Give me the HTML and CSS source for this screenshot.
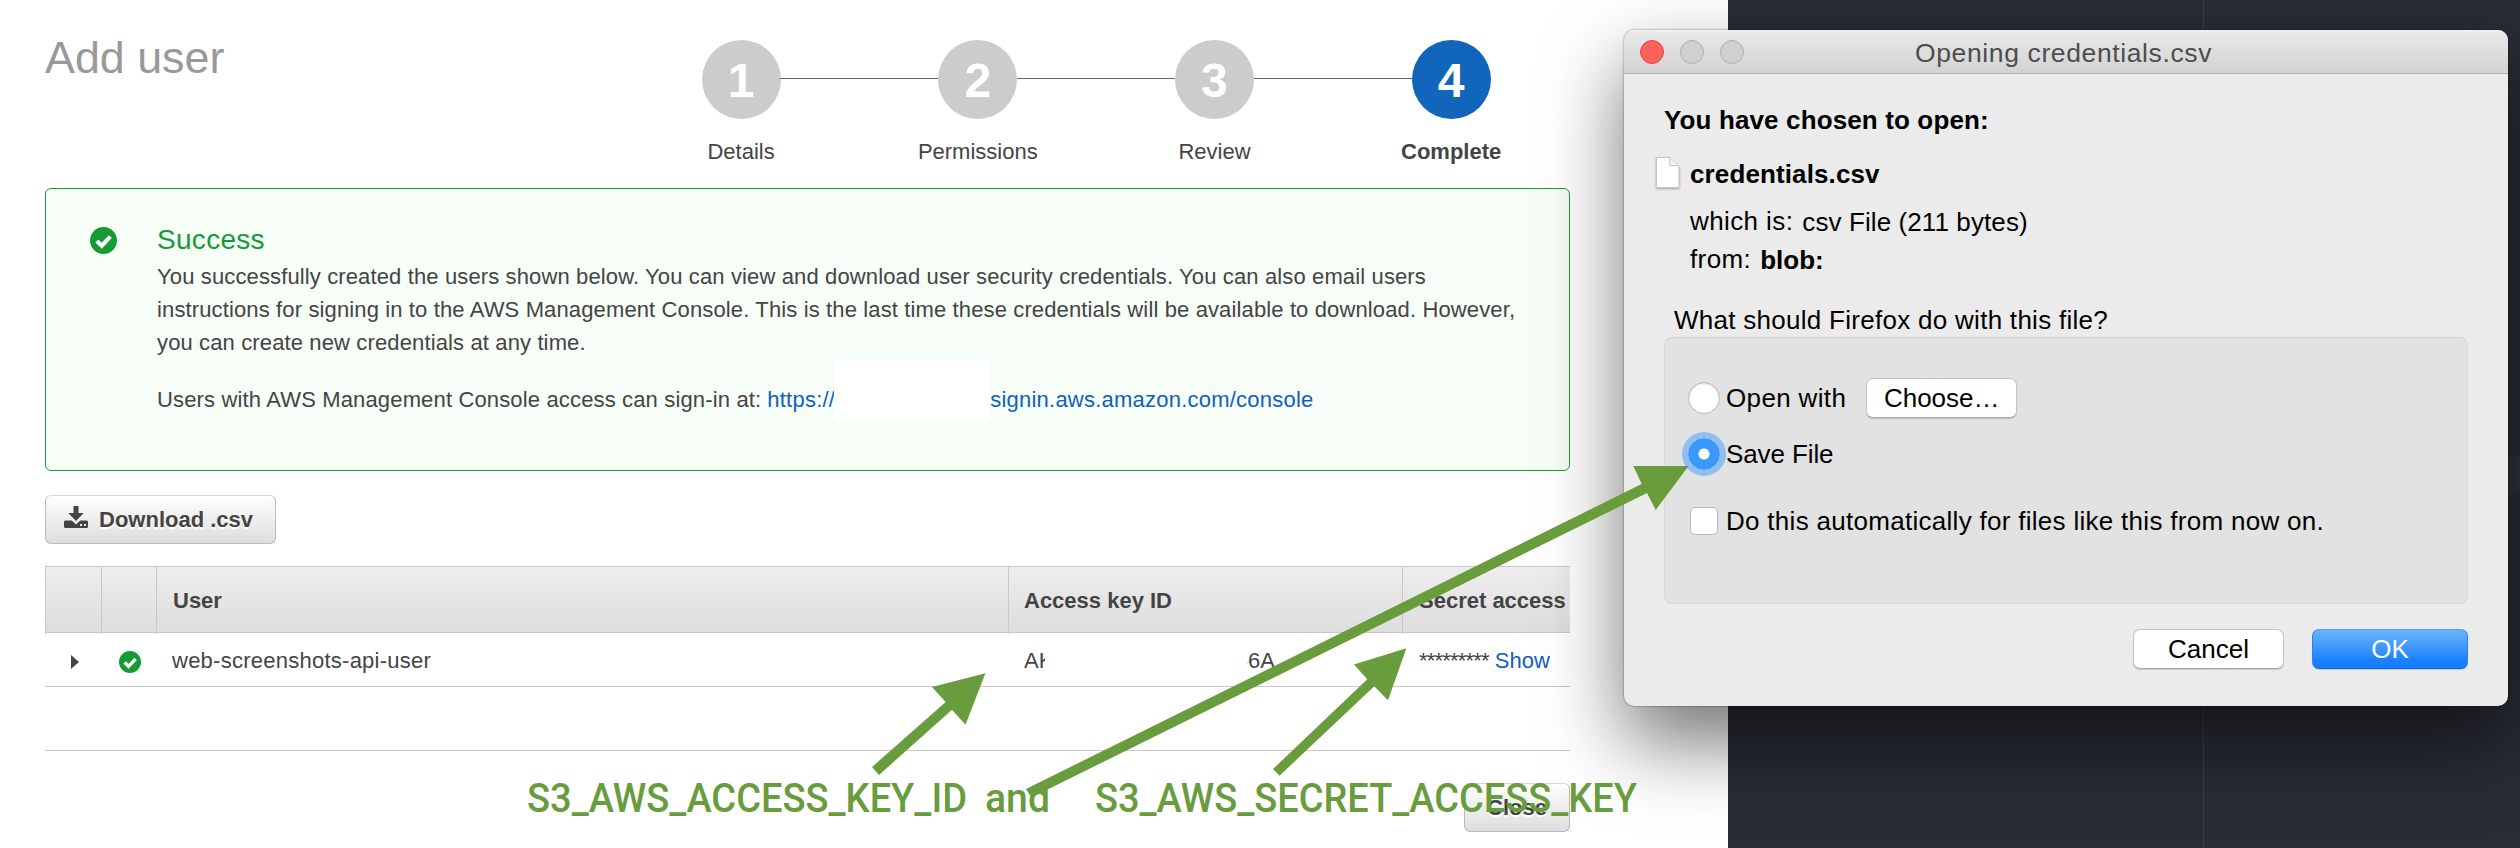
FILE: index.html
```html
<!DOCTYPE html>
<html lang="en">
<head>
<meta charset="utf-8">
<title>Add user</title>
<link rel="stylesheet" href="styles.css">
</head>
<body>
<div class="desktop">
  <main class="console">
    <header class="head">
      <h1 class="title">Add user</h1>
      <ol class="wizard">
        <li class="step"><span class="num">1</span><span class="label">Details</span></li>
        <li class="step"><span class="num">2</span><span class="label">Permissions</span></li>
        <li class="step"><span class="num">3</span><span class="label">Review</span></li>
        <li class="step current"><span class="num">4</span><span class="label">Complete</span></li>
      </ol>
    </header>

    <section class="alert">
      <svg class="alert-icon" viewBox="0 0 26 26"><circle cx="13" cy="13" r="13"/><path d="M6.6 13.4l4.7 4.7 8.3-8.8"/></svg>
      <div class="alert-body">
        <h2 class="alert-title">Success</h2>
        <p class="alert-text">You successfully created the users shown below. You can view and download user security credentials. You can also email users<br>instructions for signing in to the AWS Management Console. This is the last time these credentials will be available to download. However,<br>you can create new credentials at any time.</p>
        <p class="signin"><span class="signin-lead">Users with AWS Management Console access can sign-in at:</span><a class="link">https://</a><span class="redact"></span><a class="link signin-host">signin.aws.amazon.com/console</a></p>
      </div>
    </section>

    <button class="btn download">
      <svg class="dl-icon" viewBox="0 0 25 22"><path d="M9.500 0h5v7h5.200L12 15 4.300 7h5.200z"/><path fill-rule="evenodd" d="M1.500 14.500h6.300L12 18.600l4.300-4.100h6.200q1.500 0 1.500 1.500v4.500q0 1.500-1.500 1.500h-21Q0 22 0 20.500V16q0-1.500 1.500-1.500zM16 18v2h2v-2zm4 0v2h2v-2z"/></svg>
      <span>Download .csv</span>
    </button>

    <div class="table">
      <div class="row thead">
        <div class="c1"></div><div class="c2"></div><div class="c3">User</div><div class="c4">Access key ID</div><div class="c5">Secret access</div>
      </div>
      <div class="row tbody">
        <div class="c1"><svg class="caret" viewBox="0 0 8 14"><path d="M0 0l8 7-8 7z"/></svg></div>
        <div class="c2"><svg class="ok-icon" viewBox="0 0 26 26"><circle cx="13" cy="13" r="13"/><path d="M6.600 13.400l4.700 4.700 8.300-8.800"/></svg></div>
        <div class="c3 user-name">web-screenshots-api-user</div>
        <div class="c4 key"><span class="key-start">AK</span><span class="key-end">36A</span></div>
        <div class="c5"><span class="stars">*********</span><a class="link">Show</a></div>
      </div>
    </div>
    <footer class="foot"><button class="btn close">Close</button></footer>
  </main>
  <aside class="editor"><div class="ruler"></div><div class="active-line"></div></aside>
</div>

<div class="dialog">
  <div class="titlebar">
    <div class="lights"><i class="light red"></i><i class="light"></i><i class="light"></i></div>
    <div class="dialog-title">Opening credentials.csv</div>
  </div>
  <div class="dialog-body">
    <p class="chosen">You have chosen to open:</p>
    <div class="file">
      <svg class="doc" viewBox="0 0 26 34"><path class="sheet" d="M1.500 1.500h13l9.500 9.500v20.500H1.500z"/><path class="fold" d="M14.800 1.800V9.500h8.200"/></svg>
      <b class="file-name">credentials.csv</b>
    </div>
    <div class="meta which"><span class="which-k">which is:</span><span class="which-v">csv File (211 bytes)</span></div>
    <div class="meta from"><span class="from-k">from:</span><b class="from-v">blob:</b></div>
    <p class="question">What should Firefox do with this file?</p>
    <div class="group">
      <div class="opt open"><i class="radio"></i><span class="open-t">Open with</span><button class="mac choose">Choose…</button></div>
      <div class="opt save"><i class="radio on"></i><span class="save-t">Save File</span></div>
      <div class="opt auto"><i class="check"></i><span class="auto-t">Do this automatically for files like this from now on.</span></div>
    </div>
    <div class="actions"><button class="mac">Cancel</button><button class="mac primary">OK</button></div>
  </div>
</div>

<svg class="notes" viewBox="0 0 2520 848">
  <path d="M872 767L945.700 702 932 687 985.400 673.300 965.500 724.700 952 709.700 879 775z"/>
  <path d="M1273 769L1367.300 679.300 1354 664.500 1406.400 648.300 1388 700.300 1374.300 686.300 1279.500 775.700z"/>
  <path d="M1026 789L1641.700 484 1633.400 466H1688.600L1655.700 510 1647 493 1031.400 797.500z"/>
  <text x="527" y="812" textLength="440" lengthAdjust="spacingAndGlyphs">S3_AWS_ACCESS_KEY_ID</text>
  <text x="985" y="812" textLength="65" lengthAdjust="spacingAndGlyphs">and</text>
  <text x="1095" y="812" textLength="542" lengthAdjust="spacingAndGlyphs">S3_AWS_SECRET_ACCESS_KEY</text>
</svg>
</body>
</html>
```
FILE: styles.css
```css
* { box-sizing: border-box; }
body {
  margin: 0;
  width: 2520px;
  height: 848px;
  position: relative;
  overflow: hidden;
  font: 22px/33px "Liberation Sans", Arial, sans-serif;
  color: #444;
  white-space: nowrap;
}
h1, h2, p, ol { margin: 0; padding: 0; font-weight: normal; }
button { font: inherit; color: inherit; padding: 0; margin: 0; }
.desktop { display: flex; height: 848px; }

/* Console page */
.console { width: 1728px; background: #fff; padding: 0 158px 0 45px; }
.head { display: flex; justify-content: space-between; height: 188px; }
.title { font-size: 44.8px; line-height: 54px; padding-top: 30px; color: #999; }
.wizard { display: grid; grid-template-columns: repeat(4, 236.7px); list-style: none; padding-top: 40px; }
.step { display: flex; flex-direction: column; align-items: center; position: relative; left: -0.5px; }
.step + .step::before { content: ""; position: absolute; top: 38px; left: -79px; width: 158px; height: 1px; background: #666; }
.num { width: 79px; height: 79px; border-radius: 50%; background: #ccc; color: #fff; font-size: 48px; font-weight: bold; line-height: 81px; text-align: center; margin-bottom: 16px; }
.current .num { background: #1166bb; }
.current .label { font-weight: bold; }

.alert { display: flex; height: 283px; border: 1px solid #1a9c38; border-radius: 6px; background: #f7fef8; padding: 34px 0 0 44px; }
.alert-icon { width: 27px; height: 27px; margin: 4px 40px 0 0; flex: none; }
.alert-icon circle, .ok-icon circle { fill: #169b34; }
.alert-icon path, .ok-icon path { fill: none; stroke: #fff; stroke-width: 4; }
.alert-title { font-size: 28px; line-height: 33px; letter-spacing: 0.300px; color: #169b34; margin-bottom: 4px; }
.alert-text { letter-spacing: 0.130px; }
.signin { display: flex; align-items: flex-start; height: 33px; margin-top: 24px; letter-spacing: 0.150px; }
.signin-lead { margin-right: 6px; }
.signin .link { letter-spacing: 0.230px; }
.link { color: #1160bb; }
.redact { width: 156px; height: 62px; background: #fff; margin: -24px 0 0 -1px; }

.btn { display: flex; align-items: center; height: 49px; border: 1px solid #bbb; border-top-color: #d8d8d8; border-radius: 6px; background: linear-gradient(#fff, #ddd); font-weight: bold; text-shadow: 0 2px 1px #fff; }
.download { width: 231px; margin-top: 24px; padding-left: 18px; }
.dl-icon { width: 25px; height: 22px; margin: -5px 10px 0 0; fill: #444; }

.table { margin-top: 22px; overflow: hidden; }
.row { display: grid; grid-template-columns: 56px 55px 852px 394px 168px; }
.thead { height: 67px; background: linear-gradient(#eee, #ddd); border-top: 1px solid #c8c8c8; border-bottom: 1px solid #c8c8c8; font-weight: bold; line-height: 67px; }
.thead > div { border-left: 1px solid #c8c8c8; padding-left: 16px; }
.thead .c4 { padding-left: 15px; }
.tbody { height: 54px; border-bottom: 1px solid #c8c8c8; line-height: 56px; }
.tbody > div { padding-left: 16px; display: flex; }
.tbody .c1 { padding-left: 26px; }
.tbody .c2 { padding-left: 18px; }
.user-name { letter-spacing: 0.250px; }
.caret { width: 8px; height: 14px; margin-top: 22px; fill: #444; }
.ok-icon { width: 22px; height: 22px; margin-top: 18px; }
.key-start { width: 21px; overflow: hidden; }
.key-end { width: 28px; margin-left: 202px; overflow: hidden; display: flex; justify-content: flex-end; }
.tbody .c5 { padding-left: 17px; }
.stars { letter-spacing: -0.800px; margin-right: 6px; }
.foot { height: 82px; margin-top: 63px; border-top: 1px solid #c8c8c8; display: flex; justify-content: flex-end; padding-top: 32px; }
.close { width: 106px; justify-content: center; }

/* Editor window behind */
.editor { width: 792px; background: #282c34; position: relative; }
.ruler { width: 1px; height: 848px; margin-left: 475px; background: #3a3f48; }
.active-line { position: absolute; top: 456px; right: 0; width: 40px; height: 36px; background: #2d323b; }

/* Download dialog */
.dialog { position: absolute; left: 1624px; top: 30px; width: 884px; height: 676px; border-radius: 10px; background: #ebebeb; color: #000; font-size: 26px; box-shadow: 0 0 2px rgba(0,0,0,.6), 0 36px 80px rgba(0,0,0,.55); }
.titlebar { height: 44px; border-radius: 10px 10px 0 0; border-bottom: 1px solid #b1b1b1; background: linear-gradient(#f4f4f4, #e8e8e8 3px, #d3d3d3); display: grid; grid-template-columns: 291px 1fr; }
.lights { display: flex; gap: 16px; padding: 10px 0 0 16px; }
.light { width: 24px; height: 24px; border-radius: 50%; background: #d0d0d0; border: 1px solid #b0b0b0; }
.light.red { background: #fc605b; border-color: #df4744; }
.dialog-title { color: #4d4d4d; font-size: 26.500px; letter-spacing: 0.620px; line-height: 46px; }
.dialog-body { padding: 30px 40px 0; }
.chosen { font-weight: bold; line-height: 33px; letter-spacing: 0.130px; }
.file { display: flex; height: 34px; margin: 19px 0 0 -9px; }
.doc { width: 26px; height: 34px; margin: 0 9px 0 0; filter: drop-shadow(0 1px 1px rgba(0,0,0,.3)); }
.sheet { fill: #fff; stroke: #c4c4c4; stroke-width: 1; }
.fold { fill: #f4f4f4; stroke: #c4c4c4; }
.file-name { line-height: 36px; letter-spacing: 0.120px; }
.meta { display: flex; margin-left: 26px; line-height: 34px; }
.which { margin-top: 14px; gap: 9px; letter-spacing: 0.100px; }
.which-k, .from-k { letter-spacing: 0.400px; }
.from { margin-top: 3px; gap: 9px; }
.which-v, .from-v { padding-top: 1px; }
.question { margin: 26px 0 0 10px; line-height: 34px; letter-spacing: 0.280px; }
.group { height: 267px; width: 804px; border: 1px solid #d9d9d9; border-top-color: #d0d0d0; border-radius: 8px; background: #e2e2e2; padding: 40px 0 0 23px; }
.opt { display: flex; align-items: center; height: 40px; }
.opt span { padding-top: 1px; }
.radio { width: 32px; height: 32px; margin-right: 6px; border-radius: 50%; background: #fff; border: 1px solid #b8b8b8; box-shadow: inset 0 1px 2px rgba(0,0,0,.15); }
.radio.on { background: radial-gradient(circle, #fff 5px, #3b99fc 6px); border-color: #3b99fc; box-shadow: 0 0 0 6px #8fbff2; }
.open-t { letter-spacing: 0.350px; }
.save-t { letter-spacing: -0.100px; }
.auto-t { letter-spacing: 0.290px; }
.save { margin-top: 16px; }
.auto { margin-top: 27px; }
.check { width: 28px; height: 28px; margin: 0 8px 0 2px; border-radius: 5px; background: #fff; border: 1px solid #b8b8b8; }
.mac { width: 151px; height: 40px; border-radius: 7px; background: #fff; border: 1px solid #c4c4c4; border-bottom-color: #a8a8a8; box-shadow: 0 1px 1px rgba(0,0,0,.15); }
.choose { margin-left: 20px; }
.actions { display: flex; justify-content: flex-end; gap: 28px; margin-top: 25px; }
.actions .primary { width: 156px; color: #fff; background: linear-gradient(#6db3fa, #1a82fd 80%, #147bfd); border-color: #4a9cf5 #2a82f5 #0d62e8; }

/* Annotations drawn over everything */
.notes { position: absolute; left: 0; top: 0; width: 2520px; height: 848px; fill: #689c3c; }
.notes text { font: 500 40px Roboto, sans-serif; }
```
